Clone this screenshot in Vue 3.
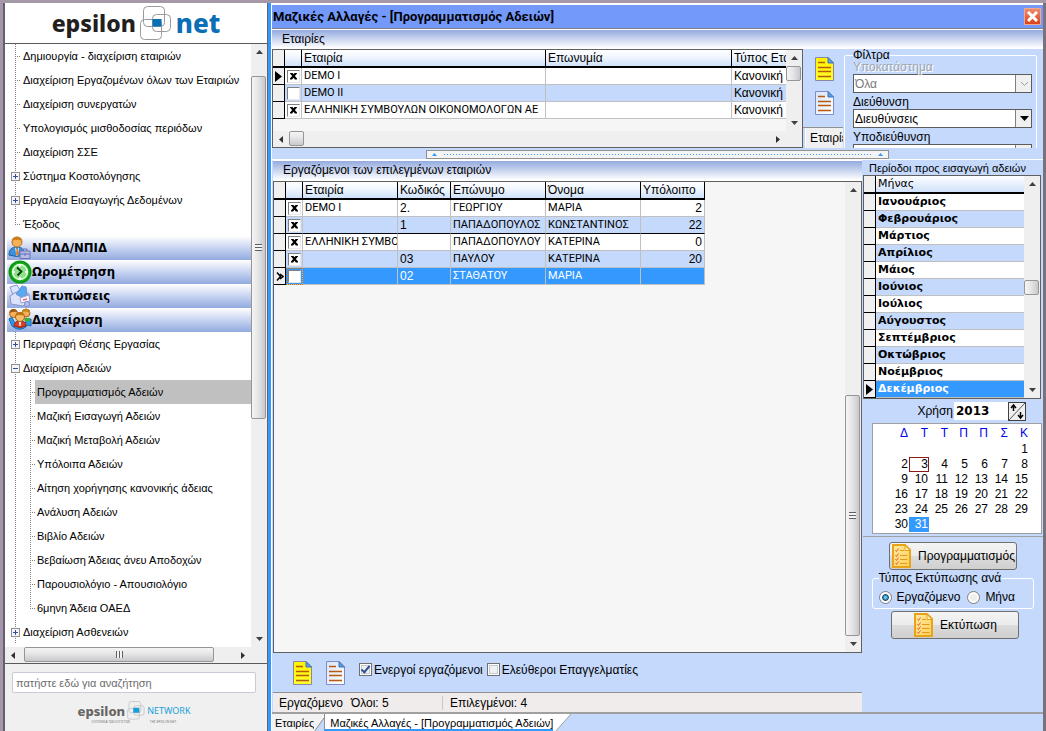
<script setup>
import { ref } from 'vue'

const tree = [
  { label: 'Δημιουργία - διαχείριση εταιριών', kind: 'leaf' },
  { label: 'Διαχείριση Εργαζομένων όλων των Εταιριών', kind: 'leaf' },
  { label: 'Διαχείριση συνεργατών', kind: 'leaf' },
  { label: 'Υπολογισμός μισθοδοσίας περιόδων', kind: 'leaf' },
  { label: 'Διαχείριση ΣΣΕ', kind: 'leaf' },
  { label: 'Σύστημα Κοστολόγησης', kind: 'plus' },
  { label: 'Εργαλεία Εισαγωγής Δεδομένων', kind: 'plus' },
  { label: 'Έξοδος', kind: 'leaf', last: true },
  { label: 'ΝΠΔΔ/ΝΠΙΔ', kind: 'head', icon: 'person' },
  { label: 'Ωρομέτρηση', kind: 'head', icon: 'clock' },
  { label: 'Εκτυπώσεις', kind: 'head', icon: 'printer' },
  { label: 'Διαχείριση', kind: 'head', icon: 'people' },
  { label: 'Περιγραφή Θέσης Εργασίας', kind: 'plus' },
  { label: 'Διαχείριση Αδειών', kind: 'minus' },
  { label: 'Προγραμματισμός Αδειών', kind: 'sub', selected: true },
  { label: 'Μαζική Εισαγωγή Αδειών', kind: 'sub' },
  { label: 'Μαζική Μεταβολή Αδειών', kind: 'sub' },
  { label: 'Υπόλοιπα Αδειών', kind: 'sub' },
  { label: 'Αίτηση χορήγησης κανονικής άδειας', kind: 'sub' },
  { label: 'Ανάλυση Αδειών', kind: 'sub' },
  { label: 'Βιβλίο Αδειών', kind: 'sub' },
  { label: 'Βεβαίωση Άδειας άνευ Αποδοχών', kind: 'sub' },
  { label: 'Παρουσιολόγιο - Απουσιολόγιο', kind: 'sub' },
  { label: '6μηνη Άδεια ΟΑΕΔ', kind: 'sub', last: true },
  { label: 'Διαχείριση Ασθενειών', kind: 'plus' },
]

const companies = ref([
  { name: 'DEMO I', type: 'Κανονική', on: true, current: true },
  { name: 'DEMO II', type: 'Κανονική', on: false },
  { name: 'ΕΛΛΗΝΙΚΗ ΣΥΜΒΟΥΛΩΝ ΟΙΚΟΝΟΜΟΛΟΓΩΝ ΑΕ', type: 'Κανονική', on: true },
])

const employees = ref([
  { company: 'DEMO I', code: '2.', last: 'ΓΕΩΡΓΙΟΥ', first: 'ΜΑΡΙΑ', rest: '2', on: true },
  { company: '', code: '1', last: 'ΠΑΠΑΔΟΠΟΥΛΟΣ', first: 'ΚΩΝΣΤΑΝΤΙΝΟΣ', rest: '22', on: true, end: true },
  { company: 'ΕΛΛΗΝΙΚΗ ΣΥΜΒΟΥΛΩΝ', code: '', last: 'ΠΑΠΑΔΟΠΟΥΛΟΥ', first: 'ΚΑΤΕΡΙΝΑ', rest: '0', on: true },
  { company: '', code: '03', last: 'ΠΑΥΛΟΥ', first: 'ΚΑΤΕΡΙΝΑ', rest: '20', on: true },
  { company: '', code: '02', last: 'ΣΤΑΘΑΤΟΥ', first: 'ΜΑΡΙΑ', rest: '', on: false, selected: true },
])

const months = ['Ιανουάριος', 'Φεβρουάριος', 'Μάρτιος', 'Απρίλιος', 'Μάιος', 'Ιούνιος', 'Ιούλιος',
  'Αύγουστος', 'Σεπτέμβριος', 'Οκτώβριος', 'Νοέμβριος', 'Δεκέμβριος']
const currentMonth = 11

const weekdays = ['Δ', 'Τ', 'Τ', 'Π', 'Π', 'Σ', 'Κ']
const weeks = [['', '', '', '', '', '', 1]]
for (let d = 2; d <= 31; d += 7) {
  weeks.push(Array.from({ length: 7 }, (_, i) => (d + i <= 31 ? d + i : '')))
}

const year = ref('2013')
const printBy = ref('employee')
const active = ref(true)
const freelance = ref(false)
const search = ref('')
</script>

<template>
  <div class="app">
    <svg class="defs" width="0" height="0" aria-hidden="true">
      <defs>
        <linearGradient id="pageFill" x1="0" y1="0" x2="1" y2="1">
          <stop offset="0" stop-color="#d9e4fb" /><stop offset="1" stop-color="#ffffff" />
        </linearGradient>
        <linearGradient id="pageYellow" x1="0" y1="0" x2="0" y2="1">
          <stop offset="0" stop-color="#fff200" /><stop offset="1" stop-color="#ffff2e" />
        </linearGradient>
        <linearGradient id="noteFill" x1="0" y1="0" x2="1" y2="1">
          <stop offset="0" stop-color="#ffe9a0" /><stop offset="1" stop-color="#ffcf5a" />
        </linearGradient>
        <symbol id="doc" viewBox="0 0 19 24">
          <path d="M.5.5H13L18.500 6V23.500H.5Z" fill="url(#pageFill)" stroke="#7f8cc8" />
          <path d="M13 .5V6H18.500Z" fill="#5aa0dc" stroke="#3f73bb" />
          <path d="M3 5.500H10M3 10.500H16M3 14.500H16M3 19.500H16" stroke="#b9590e" stroke-width="1.400" />
        </symbol>
        <symbol id="docYellow" viewBox="0 0 19 24">
          <path d="M.5.5H13L18.500 6V23.500H.5Z" fill="url(#pageYellow)" stroke="#8a86a8" />
          <path d="M13 .5V6H18.500Z" fill="#5aa0dc" stroke="#3f73bb" />
          <path d="M3 5.500H10M3 10.500H16M3 14.500H16M3 19.500H16" stroke="#b9590e" stroke-width="1.400" />
        </symbol>
        <symbol id="checklist" viewBox="0 0 19 24">
          <path d="M1 1H13L18 6V23H1Z" fill="url(#noteFill)" stroke="#e8a317" stroke-width="2" />
          <path d="M13 1.500V6.500H18Z" fill="#fff3c4" stroke="#e8a317" />
          <path d="M8 6.500H12M8 11.500H15.500M8 15.500H15.500M8 19.500H15.500" stroke="#e39a1c" />
          <path d="M3.500 6L4.500 7.500 6.500 4.500M3.500 11L4.500 12.500 6.500 9.500M3.500 15L4.500 16.500 6.500 13.500M3.500 19L4.500 20.500 6.500 17.500" fill="none" stroke="#e8603c" />
        </symbol>
        <symbol id="person" viewBox="0 0 24 24">
          <path d="M1 19C1 13 4 11 9 11S16 13 16 19Q9 22 1 19Z" fill="#3c8fd8" stroke="#1d63a8" />
          <path d="M7 11L9 14 11 11 10 19 8.500 20Z" fill="#fff" />
          <path d="M8.500 13H10L10.500 18 9 20 8 18Z" fill="#e87a1c" />
          <circle cx="9" cy="6" r="5" fill="#f5b05a" stroke="#b86f1a" />
          <path d="M4 6Q3 1 9 .7 15 1 14 6 12 3 9 4 6 3 4 6Z" fill="#c9801c" />
          <path d="M12 15H22V22.500H12Z" fill="#b6bce6" stroke="#6a72b8" />
          <path d="M15 15V13H19V15M12 18H22M17 17V20" fill="none" stroke="#6a72b8" />
        </symbol>
        <symbol id="clock" viewBox="0 0 24 24">
          <circle cx="12" cy="12" r="10.500" fill="#1fae1f" stroke="#0b9a12" stroke-width="2" />
          <circle cx="12" cy="12" r="7.500" fill="#8fe08a" stroke="#e8ffe6" stroke-width="1.500" />
          <path d="M12 5V7M12 17V19M5 12H7M17 12H19" stroke="#fff" stroke-width="1.500" />
          <path d="M9 7.500L13.500 11.500 9.500 15.500" fill="none" stroke="#073f0a" stroke-width="1.800" />
        </symbol>
        <symbol id="printer" viewBox="0 0 24 24">
          <path d="M2 3L9 1 13 8 5 11Z" fill="#dfe5fb" stroke="#8a97d6" />
          <path d="M2 12L8 8 21 10 22 17 15 22 3 20Z" fill="#dde2f8" stroke="#8a94cf" />
          <path d="M8 10L14 2 18 3 19 11 13 13Z" fill="#5aa9ee" stroke="#6c8fd8" />
          <path d="M12 14L21 11 22 17 13 19Z" fill="#f5f7ff" stroke="#98a2da" />
          <path d="M15 16L19 15" stroke="#e66" stroke-width="1.500" />
          <circle cx="19" cy="20" r="2.500" fill="#b9c1ee" stroke="#7f8acb" />
        </symbol>
        <symbol id="people" viewBox="0 0 24 24">
          <path d="M1 11L4 9 6 14 12 17 19 14 17 12 23 11 23 18 20 17Q12 25 4 18Z" fill="#2f9be6" stroke="#1468b4" />
          <circle cx="5.500" cy="5.500" r="4" fill="#f5b05a" stroke="#a8651a" />
          <path d="M1.500 5Q2 .8 6 1 9 1.500 9.500 4 6 3 1.500 5Z" fill="#9b5a12" />
          <circle cx="18" cy="5" r="4" fill="#f5b05a" stroke="#a8651a" />
          <path d="M14 4Q15 .5 18 .7 22 1 22 5 19 2.500 14 4Z" fill="#c9861c" />
          <path d="M16 10H22V13L17 14Z" fill="#3fae3f" />
          <path d="M6 18Q6 13 12 13T18 18Q12 21 6 18Z" fill="#d9412b" stroke="#9c2213" />
          <path d="M11 13.500H13L12.500 18H11.500Z" fill="#fff" />
          <circle cx="12" cy="9" r="4.500" fill="#f7bd6a" stroke="#a8651a" />
          <path d="M7.500 8Q8 4 12 4T16.500 8Q12 6 7.500 8Z" fill="#b8741a" />
        </symbol>
        <symbol id="up" viewBox="0 0 7 4"><path d="M0 4L3.500 0 7 4Z" fill="#404040" /></symbol>
        <symbol id="down" viewBox="0 0 7 4"><path d="M0 0L3.500 4 7 0Z" fill="#404040" /></symbol>
        <symbol id="left" viewBox="0 0 4 7"><path d="M4 0L0 3.500 4 7Z" fill="#303030" /></symbol>
        <symbol id="right" viewBox="0 0 4 7"><path d="M0 0L4 3.500 0 7Z" fill="#303030" /></symbol>
        <symbol id="squares" viewBox="0 0 32 34">
          <g fill="none" stroke="#9a9a9a">
            <rect x="3.500" y=".5" width="21" height="20" rx="4" />
            <rect x="12.500" y="8.500" width="18" height="17" rx="4" />
            <rect x=".5" y="13.500" width="21" height="20" rx="4" />
          </g>
          <path d="M12.500 13H21.500V20.500H12.500Z" fill="#0a6fb5" />
        </symbol>
        <symbol id="squaresSmall" viewBox="0 0 32 34">
          <g fill="none" stroke="#c4c4c4" stroke-width="1.500">
            <rect x="3.500" y="1" width="21" height="20" rx="4" />
            <rect x="12.500" y="8.500" width="18" height="17" rx="4" />
            <rect x="1" y="13.500" width="21" height="19" rx="4" />
          </g>
          <path d="M11 12H22V21H11Z" fill="#1aa0d8" />
        </symbol>
      </defs>
    </svg>

    <aside class="sidebar">
      <div class="brand">
        <span class="brand-a">epsilon</span>
        <svg width="32" height="34" aria-hidden="true"><use href="#squares" /></svg>
        <span class="brand-b">net</span>
      </div>

      <div class="tree-box">
        <nav class="tree">
          <ul>
            <li v-for="(n, i) in tree" :key="i" :class="n.kind">
              <template v-if="n.kind === 'head'">
                <a href="#" class="head-link">
                  <svg width="24" height="24" aria-hidden="true"><use :href="'#' + n.icon" /></svg>
                  <span>{{ n.label }}</span>
                </a>
              </template>
              <template v-else>
                <svg class="guide" width="15" height="24" aria-hidden="true">
                  <path :d="n.last && n.kind === 'leaf' ? 'M8.5 0V12' : 'M8.5 0V24'" stroke="#808080" stroke-dasharray="1 1" />
                  <path v-if="n.kind === 'leaf'" d="M8 12.5H13" stroke="#808080" stroke-dasharray="1 1" />
                  <g v-if="n.kind === 'plus' || n.kind === 'minus'">
                    <rect x="4.5" y="8.5" width="8" height="8" fill="#f6f6f6" stroke="#8f8f8f" />
                    <path :d="n.kind === 'plus' ? 'M6 12.5H11M8.5 10V15' : 'M6 12.5H11'" stroke="#33509c" />
                  </g>
                </svg>
                <svg v-if="n.kind === 'sub'" class="guide" width="13" height="24" aria-hidden="true">
                  <path :d="n.last ? 'M8.5 0V12' : 'M8.5 0V24'" stroke="#808080" stroke-dasharray="1 1" />
                  <path d="M8 12.5H13" stroke="#808080" stroke-dasharray="1 1" />
                </svg>
                <a href="#" class="item" :class="{ chosen: n.selected }">{{ n.label }}</a>
              </template>
            </li>
          </ul>
        </nav>
        <div class="vbar tree-v">
          <span class="arrow"><svg width="7" height="4"><use href="#up" /></svg></span>
          <div class="track"><div class="thumb thumb-tree"><i class="grip"></i></div></div>
          <span class="arrow"><svg width="7" height="4"><use href="#down" /></svg></span>
        </div>
        <div class="hbar tree-h">
          <span class="arrow"><svg width="4" height="7"><use href="#left" /></svg></span>
          <div class="track"><div class="thumb thumb-treeh"><i class="grip"></i></div></div>
          <span class="arrow"><svg width="4" height="7"><use href="#right" /></svg></span>
        </div>
        <div class="corner"></div>
      </div>

      <div class="side-foot">
        <input v-model="search" type="text" class="search" aria-label="Αναζήτηση" placeholder="πατήστε εδώ για αναζήτηση" />
        <div class="network">
          <span class="net-a">epsilon</span>
          <svg width="18" height="19" aria-hidden="true"><use href="#squaresSmall" /></svg>
          <span class="net-b">NETWORK</span>
        </div>
        <div class="tagline"><span>ΛΟΓΙΣΜΙΚΑ ΤΩΝ ΛΟΓΙΣΤΩΝ</span><span>ΤΗΣ EPSILON NET</span></div>
      </div>
    </aside>

    <div class="divider"></div>

    <main class="main">
      <header class="title">
        <h1>Μαζικές Αλλαγές - [Προγραμματισμός Αδειών]</h1>
        <button type="button" class="close" aria-label="Κλείσιμο">
          <svg width="11" height="11"><path d="M1 1L10 10M10 1L1 10" stroke="#fff" stroke-width="3" /></svg>
        </button>
      </header>
      <h2 class="section">Εταιρίες</h2>

      <div class="top">
        <div class="grid-a">
          <div class="grid-view">
            <table class="data">
              <colgroup><col class="c-ind" /><col class="c-chk" /><col class="a-name" /><col class="a-brand" /><col class="a-type" /></colgroup>
              <thead>
                <tr><th></th><th></th><th>Εταιρία</th><th>Επωνυμία</th><th>Τύπος Εταιρίας</th></tr>
              </thead>
              <tbody>
                <tr v-for="(c, i) in companies" :key="i" :class="{ alt: i % 2 }">
                  <td class="ind"><svg v-if="c.current" width="7" height="11"><path d="M0 0L7 5.5 0 11Z" /></svg></td>
                  <td class="chk"><input v-model="c.on" type="checkbox" class="xbox" :aria-label="c.name" /></td>
                  <td>{{ c.name }}</td>
                  <td></td>
                  <td class="kind">{{ c.type }}</td>
                </tr>
              </tbody>
            </table>
          </div>
          <div class="vbar">
            <span class="arrow"><svg width="7" height="4"><use href="#up" /></svg></span>
            <div class="track"><div class="thumb thumb-s"></div></div>
            <span class="arrow"><svg width="7" height="4"><use href="#down" /></svg></span>
          </div>
          <div class="hbar">
            <span class="arrow"><svg width="4" height="7"><use href="#left" /></svg></span>
            <div class="track"><div class="thumb thumb-s"></div></div>
            <span class="arrow"><svg width="4" height="7"><use href="#right" /></svg></span>
          </div>
          <div class="corner"></div>
        </div>

        <div class="pick">
          <div class="pick-icons">
            <button type="button" class="bare" aria-label="Επιλογή όλων"><svg width="19" height="24"><use href="#docYellow" /></svg></button>
            <button type="button" class="bare" aria-label="Αποεπιλογή όλων"><svg width="19" height="24"><use href="#doc" /></svg></button>
          </div>
          <div class="pick-tab">Εταιρίες</div>
        </div>

        <fieldset class="filters">
          <legend>Φίλτρα</legend>
          <label class="off" for="branch">Υποκατάστημα</label>
          <div class="combo off">
            <select id="branch" disabled><option>Όλα</option></select>
            <svg class="drop" width="16" height="17" aria-hidden="true"><path d="M5 7L8.500 10.500 12 7" fill="none" stroke="#a0a0a0" /></svg>
          </div>
          <label for="division">Διεύθυνση</label>
          <div class="combo">
            <select id="division"><option>Διευθύνσεις</option></select>
            <svg class="drop" width="16" height="17" aria-hidden="true"><path d="M4 6H13L8.500 11Z" /></svg>
          </div>
          <label for="subdivision">Υποδιεύθυνση</label>
          <div class="combo">
            <select id="subdivision"><option>Υποδιευθύνσεις</option></select>
            <svg class="drop" width="16" height="17" aria-hidden="true"><path d="M4 6H13L8.500 11Z" /></svg>
          </div>
        </fieldset>
      </div>

      <div class="splitter">
        <div class="handle">
          <svg width="5" height="3"><path d="M0 3L2.500 0 5 3Z" /></svg>
          <i></i>
          <svg width="5" height="3"><path d="M0 3L2.500 0 5 3Z" /></svg>
        </div>
      </div>

      <div class="lower">
        <section class="people-col">
          <h2 class="section tall">Εργαζόμενοι των επιλεγμένων εταιριών</h2>
          <div class="grid-b">
            <div class="grid-view">
              <table class="data emp">
                <colgroup><col class="c-ind" /><col class="c-chk" /><col class="b-comp" /><col class="b-code" /><col class="b-last" /><col class="b-first" /><col class="b-rest" /></colgroup>
                <thead>
                  <tr><th></th><th></th><th>Εταιρία</th><th>Κωδικός</th><th>Επώνυμο</th><th>Όνομα</th><th>Υπόλοιπο</th></tr>
                </thead>
                <tbody>
                  <tr v-for="(e, i) in employees" :key="i" :class="{ alt: i % 2, sel: e.selected, end: e.end }">
                    <td class="ind"><svg v-if="e.selected" width="8" height="11"><path d="M1 1.500L4.500 5.500 1 9.500M4 3L7 5.500 4 8" fill="none" stroke="#000" stroke-width="1.500" /></svg></td>
                    <td class="chk"><input v-model="e.on" type="checkbox" class="xbox" :aria-label="e.last" /></td>
                    <td>{{ e.company }}</td>
                    <td class="kind">{{ e.code }}</td>
                    <td>{{ e.last }}</td>
                    <td>{{ e.first }}</td>
                    <td class="kind num">{{ e.rest }}</td>
                  </tr>
                </tbody>
              </table>
            </div>
            <div class="vbar">
              <span class="arrow"><svg width="7" height="4"><use href="#up" /></svg></span>
              <div class="track low"><div class="thumb thumb-emp"><i class="grip"></i></div></div>
              <span class="arrow"><svg width="7" height="4"><use href="#down" /></svg></span>
            </div>
          </div>
          <div class="tools">
            <button type="button" class="bare" aria-label="Επιλογή όλων"><svg width="19" height="24"><use href="#docYellow" /></svg></button>
            <button type="button" class="bare" aria-label="Αποεπιλογή όλων"><svg width="19" height="24"><use href="#doc" /></svg></button>
            <label><input v-model="active" type="checkbox" class="tick" />Ενεργοί εργαζόμενοι</label>
            <label><input v-model="freelance" type="checkbox" class="tick" />Ελεύθεροι Επαγγελματίες</label>
          </div>
          <div class="status">
            <span>Εργαζόμενο</span><span class="s-all">Όλοι: 5</span><span class="s-sel">Επιλεγμένοι: 4</span>
          </div>
        </section>

        <section class="side">
          <h3>Περίοδοι προς εισαγωγή αδειών</h3>
          <div class="grid-m">
            <table class="months">
              <colgroup><col class="m-ind" /><col /></colgroup>
              <thead><tr><th></th><th>Μήνας</th></tr></thead>
              <tbody>
                <tr v-for="(m, i) in months" :key="m" :class="{ alt: i % 2, sel: i === currentMonth }">
                  <td class="ind"><svg v-if="i === currentMonth" width="7" height="11"><path d="M0 0L7 5.5 0 11Z" /></svg></td>
                  <td>{{ m }}</td>
                </tr>
              </tbody>
            </table>
            <div class="vbar">
              <span class="arrow"><svg width="7" height="4"><use href="#up" /></svg></span>
              <div class="track mid"><div class="thumb thumb-s"></div></div>
              <span class="arrow"><svg width="7" height="4"><use href="#down" /></svg></span>
            </div>
          </div>
          <div class="year">
            <label for="year">Χρήση</label>
            <input id="year" v-model="year" type="text" />
            <button type="button" class="spin" aria-label="Αλλαγή χρήσης">
              <svg width="16" height="17"><path d="M0 17L16 0" stroke="#555" /><path d="M2 5L4.500 2 7 5M4.500 2V8M9 12L11.500 15 14 12M11.500 15V9" fill="none" stroke="#000" stroke-width="1.500" /></svg>
            </button>
          </div>
          <div class="calendar">
            <table>
              <thead><tr><th v-for="(d, i) in weekdays" :key="i">{{ d }}</th></tr></thead>
              <tbody>
                <tr v-for="(w, i) in weeks" :key="i">
                  <td v-for="(d, j) in w" :key="j" :class="{ today: d === 3, picked: d === 31 }">{{ d }}</td>
                </tr>
              </tbody>
            </table>
          </div>
          <div class="actions">
            <button type="button" class="big"><svg width="19" height="24"><use href="#checklist" /></svg>Προγραμματισμός</button>
            <fieldset class="print-by">
              <legend>Τύπος Εκτύπωσης ανά</legend>
              <label><input v-model="printBy" type="radio" name="printBy" value="employee" />Εργαζόμενο</label>
              <label><input v-model="printBy" type="radio" name="printBy" value="month" />Μήνα</label>
            </fieldset>
            <button type="button" class="big wide"><svg width="19" height="24"><use href="#checklist" /></svg>Εκτύπωση</button>
          </div>
        </section>
      </div>

      <nav class="tabs">
        <a href="#" class="tab-a">Εταιρίες</a>
        <svg class="slope" width="10" height="18" aria-hidden="true"><path d="M0 0H10V4L0 18Z" fill="#f3f3f3" /><path d="M10 4L0 18" stroke="#909090" /></svg>
        <a href="#" class="tab-b">Μαζικές Αλλαγές - [Προγραμματισμός Αδειών]</a>
        <svg class="slope" width="18" height="18" aria-hidden="true"><path d="M0 0H18L2 18H0Z" fill="#fff" /><path d="M18 0L2 18" stroke="#a0a0a0" /></svg>
      </nav>
    </main>
  </div>
</template>

<style>
html, body { height: 100%; }
#app { height: 100%; }
</style>

<style scoped>
.app {
  box-sizing: border-box;
  display: flex;
  height: 100vh;
  padding-left: 3px;
  border-top: 3px solid #a598a8;
  background: #a596ad;
  overflow: hidden;
  color: #000;
  font-family: "Liberation Sans", Arial, sans-serif;
  font-size: 12px;
}
.app *, .app *::before, .app *::after { box-sizing: border-box; }
.defs { position: absolute; }
h1, h2, h3, ul, table, fieldset { margin: 0; padding: 0; }
h1, h2, h3 { font-weight: normal; }
button, input, select { font: inherit; color: inherit; margin: 0; }
svg { display: block; flex: none; }
a { color: inherit; text-decoration: none; }

/* sidebar */
.sidebar {
  display: flex;
  flex-direction: column;
  flex: none;
  width: 265px;
  border-left: 2px solid #63616a;
  border-right: 1px solid #63616a;
  background: #fff;
  font-size: 11px;
}
.brand {
  display: flex;
  align-items: center;
  justify-content: center;
  gap: 4px;
  height: 41px;
  border-bottom: 1px solid #5a5a5a;
  font-family: "Noto Sans", sans-serif;
  font-size: 23px;
  font-weight: 800;
  line-height: 36px;
}
.brand-a { color: #231f20; }
.brand-b { color: #0a6fb5; font-size: 26px; }
.tree-box {
  display: grid;
  grid-template: 1fr 16px / 1fr 16px;
  flex: 1;
  min-height: 0;
  border-bottom: 1px solid #5a5a5a;
}
.tree { min-height: 0; overflow: hidden; padding-left: 2px; }
ul { list-style: none; }
li { display: flex; height: 24px; line-height: 24px; white-space: nowrap; }
.item { flex: 1; padding-left: 1px; }
.sub .item { padding-left: 2px; }
.chosen { background: #c0c0c0; }
.head-link {
  display: flex;
  flex: 1;
  padding-left: 1px;
  background: linear-gradient(#fff, #cdd8f2 45%, #92aade);
  font-family: "DejaVu Sans Condensed", "DejaVu Sans", sans-serif;
  font-size: 13px;
  font-weight: bold;
  line-height: 23px;
}

/* scrollbars */
.vbar, .hbar { display: flex; background: #efefef; }
.vbar { flex-direction: column; width: 16px; }
.hbar { height: 16px; }
.arrow { display: flex; flex: none; align-items: center; justify-content: center; width: 16px; height: 16px; }
.track { display: flex; flex: 1; min-width: 0; min-height: 0; }
.vbar .track { flex-direction: column; }
.thumb {
  display: flex;
  flex: none;
  align-items: center;
  justify-content: center;
  border: 1px solid #969696;
  border-radius: 2px;
  background: linear-gradient(90deg, #f5f5f5, #e6e6e8 45%, #c9c9cd);
}
.hbar .thumb { background: linear-gradient(#f5f5f5, #e6e6e8 45%, #c9c9cd); }
.thumb-s { width: 15px; height: 15px; }
.thumb-tree { width: 15px; height: 60%; margin-top: 16px; }
.thumb-treeh { width: 89%; height: 15px; margin-left: 3px; }
.thumb-emp { width: 15px; height: 55%; }
.low { justify-content: flex-end; }
.mid { justify-content: center; }
.grip { width: 7px; height: 7px; background: repeating-linear-gradient(#606060 0 1px, #f4f4f4 1px 3px); }
.hbar .grip { background: repeating-linear-gradient(90deg, #606060 0 1px, #f4f4f4 1px 3px); }
.corner { background: #efefef; }

.side-foot { flex: none; height: 67px; padding: 8px 11px 0 7px; background: #f0f0f0; }
.search {
  display: block;
  width: 100%;
  height: 21px;
  padding: 0 3px;
  border: 1px solid #c9ccd4;
  border-radius: 2px;
  background: #fff;
}
.search::placeholder { color: #6d6d6d; opacity: 1; }
.network { display: flex; align-items: center; justify-content: center; gap: 2px; height: 19px; margin-top: 8px; font-family: "Noto Sans", sans-serif; }
.net-a { font-size: 13px; font-weight: 800; color: #666; }
.net-b { font-size: 9px; color: #1aa0d8; }
.tagline { display: flex; justify-content: center; gap: 20px; font-size: 3px; line-height: 4px; color: #777; }

.divider { flex: none; width: 3px; background: #3399ff; }

/* main window */
.main {
  display: flex;
  flex: 1;
  flex-direction: column;
  min-width: 0;
  border-left: 1px solid #fff;
  border-right: 3px solid #77727c;
  background: #c4d9fb;
}
.title {
  display: flex;
  align-items: center;
  justify-content: space-between;
  flex: none;
  height: 26px;
  padding: 0 2px 0 1px;
  border-top: 2px solid #fff;
  border-bottom: 1px solid #808080;
  background: #7399fb;
}
.title h1 { font-family: Roboto, sans-serif; font-size: 13px; font-weight: bold; }
.close {
  display: flex;
  align-items: center;
  justify-content: center;
  width: 17px;
  height: 17px;
  padding: 0;
  border: 1px solid #f0a890;
  background: linear-gradient(#ea8a6e, #d9441c);
}
.section {
  flex: none;
  height: 20px;
  padding-left: 10px;
  border-top: 1px solid #fff;
  background: linear-gradient(#94abdf, #fff 95%);
  font-size: 12px;
  line-height: 18px;
}
.section.tall { height: 21px; line-height: 19px; }

.top { display: flex; flex: none; height: 99px; overflow: hidden; }
.grid-a {
  display: grid;
  grid-template: 1fr 16px / 1fr 16px;
  flex: 1;
  min-width: 0;
  border: 1px solid #606060;
  background: #f6f6f6;
}
.grid-view { min-width: 0; min-height: 0; overflow: hidden; }
.data { table-layout: fixed; border-collapse: separate; border-spacing: 0; width: 640px; }
.data.emp { width: 431px; }
.c-ind { width: 12px; }
.c-chk { width: 17px; }
.a-name { width: 244px; }
.a-brand { width: 186px; }
.b-comp, .b-last, .b-first { width: 95px; }
.b-code { width: 53px; }
.b-rest { width: 64px; }
.data th {
  height: 18px;
  padding: 0 2px;
  border-right: 1px solid #000;
  border-bottom: 2px solid #000;
  background: linear-gradient(#fff, #f2f7ff 40%, #cfe1fa);
  font-weight: normal;
  line-height: 15px;
  text-align: left;
  white-space: nowrap;
}
.data th:first-child, .months th:first-child { background: #f0f0f0; }
.data td {
  height: 17px;
  padding: 0 2px;
  border-right: 1px solid #c0c0c0;
  border-bottom: 1px solid #c0c0c0;
  background: #fff;
  font-family: Roboto, sans-serif;
  font-size: 11px;
  line-height: 16px;
  overflow: hidden;
  white-space: nowrap;
}
.data .kind { font-family: "Liberation Sans", sans-serif; font-size: 12px; }
.alt td { background: #c4d9fb; }
.end td { border-bottom-color: #000; }
.sel td { background: #3399ff; color: #fff; }
.data .ind, .months .ind {
  padding: 0 0 0 2px;
  border-right: 1px solid #000;
  border-bottom: 1px solid #000;
  background: #f0f0f0;
}
.data .chk { padding: 0 0 0 2px; border-right-color: #c0c0c0; }
.emp .sel .chk { outline: 1px dotted #d07000; outline-offset: -1px; }
.data .num { padding-right: 2px; text-align: right; }
.xbox {
  display: block;
  appearance: none;
  width: 13px;
  height: 13px;
  border: 1px solid;
  border-color: #808080 #e8e8e8 #e8e8e8 #808080;
  background: #fff;
}
.xbox:checked::before {
  content: "";
  display: block;
  width: 7px;
  height: 7px;
  margin: 2px;
  background: #000;
  clip-path: polygon(0 0, 30% 0, 50% 25%, 70% 0, 100% 0, 100% 15%, 70% 50%, 100% 85%, 100% 100%, 70% 100%, 50% 75%, 30% 100%, 0 100%, 0 85%, 30% 50%, 0 15%);
}

.pick { display: flex; flex-direction: column; flex: none; width: 40px; }
.bare { display: block; padding: 0; border: 0; background: none; }
.pick-icons { display: flex; flex: 1; flex-direction: column; align-items: center; gap: 10px; padding: 8px 0 0 3px; border-bottom: 1px solid #909090; }
.pick-tab {
  height: 20px;
  margin-left: 2px;
  padding-left: 4px;
  border-left: 1px solid #fff;
  background: #f0f0f0;
  line-height: 20px;
  overflow: hidden;
}
.filters {
  flex: none;
  width: 193px;
  height: 130px;
  margin: 0 6px 0 1px;
  padding: 0 4px 0 8px;
  border: 1px solid #fff;
  border-radius: 2px;
}
.filters legend { height: 12px; padding: 0; line-height: 12px; }
.filters label { display: block; height: 14px; line-height: 14px; }
.filters label.off { height: 13px; color: #a3a7b0; line-height: 12px; text-shadow: 1px 1px #fff; }
.combo {
  display: flex;
  height: 19px;
  margin-bottom: 2px;
  border: 1px solid #5c5c5c;
  background: #fff;
}
.combo select {
  flex: 1;
  appearance: none;
  min-width: 0;
  padding: 0 1px;
  border: 0;
  background: #fff;
  opacity: 1;
}
.combo.off { color: #7a7a7a; }
.drop { border-left: 1px solid #808080; background: #f0f0f0; }

.splitter { display: flex; flex: none; justify-content: center; height: 12px; padding-top: 2px; border-bottom: 1px solid #fff; }
.handle {
  display: flex;
  align-items: center;
  gap: 7px;
  width: 60%;
  height: 9px;
  padding: 0 5px;
  border: 1px solid #909090;
  background: #f4f4f4;
  fill: #3399ff;
}
.handle i { flex: 1; height: 1px; background: repeating-linear-gradient(90deg, #3399ff 0 1px, #f4f4f4 1px 3px); }

.lower { display: flex; flex: 1; min-height: 0; border-bottom: 2px solid #a0a0a0; }
.people-col { display: flex; flex: 1; flex-direction: column; min-width: 0; padding-left: 1px; }
.grid-b { display: flex; flex: 1; min-height: 0; border: 1px solid #606060; background: #f6f6f6; }
.grid-b .grid-view { flex: 1; }
.tools { display: flex; flex: none; align-items: center; height: 40px; padding-left: 20px; border-bottom: 1px solid #909090; }
.tools .bare + .bare { margin: 0 14px; }
.tools label { display: flex; align-items: center; gap: 2px; margin: 0 4px 6px 0; }
.tick {
  appearance: none;
  display: block;
  width: 13px;
  height: 13px;
  border: 1px solid #707070;
  background: #f0f0f0;
  box-shadow: inset 0 0 0 1px #fff, inset 0 0 0 2px #c5cad2;
}
.tick:checked::before {
  content: "";
  display: block;
  width: 5px;
  height: 9px;
  margin-left: 3px;
  border: solid #2f4f96;
  border-width: 0 2px 2px 0;
  transform: rotate(40deg);
}
.status {
  display: flex;
  align-items: center;
  flex: none;
  height: 19px;
  padding-left: 6px;
  background: #f0ecec;
}
.s-all { width: 92px; margin-left: 8px; border-right: 1px solid #c8c8c8; }
.s-sel { padding-left: 7px; }

/* right column */
.side { flex: none; width: 181px; padding-left: 1px; }
.side h3 { height: 15px; padding: 2px 0 0 6px; font-size: 11px; line-height: 13px; white-space: nowrap; }
.grid-m { display: flex; margin-right: 2px; border: 1px solid #606060; background: #f0f0f0; }
.months { flex: 1; border-collapse: separate; border-spacing: 0; table-layout: fixed; font-family: "DejaVu Sans", sans-serif; font-size: 11px; }
.m-ind { width: 12px; }
.months th { height: 18px; padding: 0 2px; border-bottom: 2px solid #000; background: linear-gradient(#fff, #cfe1fa); font-weight: normal; line-height: 14px; text-align: left; }
.months th:first-child { border-right: 1px solid #000; }
.months td { height: 17px; padding: 0 2px; border-bottom: 1px solid #c0c0c0; background: #fff; font-weight: bold; line-height: 16px; }
.months .alt td { background: #c4d9fb; }
.months .sel td { background: #3399ff; }
.months .alt .ind, .months .ind, .data .alt .ind, .data .sel .ind, .months .sel .ind { background: #f0f0f0; }
.data .alt .chk { background: #c4d9fb; }
.data .sel .chk { background: #3399ff; }
.year { display: flex; align-items: center; justify-content: flex-end; height: 24px; padding-right: 17px; }
.year input { width: 54px; height: 18px; margin-left: 1px; padding: 0 2px; border: 0; background: #fff; font-family: "DejaVu Sans", sans-serif; font-size: 12px; font-weight: bold; }
.spin { width: 18px; height: 19px; padding: 0; border: 1px solid #404040; background: #f0f0f0; }
.calendar { height: 111px; margin: 0 1px 0 9px; border: 1px solid #a0a0a0; background: #fff; }
.calendar table { margin-left: 16px; border-collapse: separate; border-spacing: 0; }
.calendar th { width: 20px; height: 18px; padding: 0 1px 0 0; color: #0000f0; font-weight: normal; line-height: 16px; text-align: right; }
.calendar td { width: 20px; height: 15px; padding: 0 1px 0 0; line-height: 15px; text-align: right; }
.calendar .today { padding-right: 0; border: 1px solid #8b1a1a; line-height: 13px; }
.calendar .picked { background: #3399ff; color: #fff; }
.actions { display: flex; flex-direction: column; align-items: center; margin-top: 2px; padding: 5px 1px 0 0; border-top: 1px solid #a0a0a0; }
.big {
  display: flex;
  align-items: center;
  justify-content: center;
  gap: 7px;
  width: 128px;
  height: 28px;
  padding: 0 1px 0 3px;
  border: 1px solid #707070;
  border-radius: 3px;
  background: linear-gradient(#f4f4f4, #ebebeb 50%, #dcdcdc 51%, #cfcfcf);
}
.big.wide { margin: 2px 0 0 4px; }
.print-by { display: flex; align-items: center; gap: 7px; width: 162px; height: 37px; margin: 2px 0 0; padding: 5px 4px 0 6px; border: 1px solid #fff; border-radius: 3px; }
.print-by legend { padding: 0; line-height: 13px; }
.print-by label { display: flex; align-items: center; gap: 5px; }
.print-by input {
  appearance: none;
  width: 13px;
  height: 13px;
  border: 1px solid #808080;
  border-radius: 50%;
  background: #eee;
  box-shadow: inset 0 0 0 2px #fff;
}
.print-by input:checked { background: radial-gradient(circle, #5fc8f5 0 1px, #15476f 3px, #f4f4f4 4px); }

/* window tabs */
.tabs { display: flex; flex: none; height: 17px; font-size: 11px; line-height: 18px; white-space: nowrap; }
.tab-a { padding-left: 3px; background: #f3f3f3; }
.tab-b { padding-left: 5px; border-left: 1px solid #909090; border-bottom: 2px solid #3399ff; background: #fff; }
</style>
